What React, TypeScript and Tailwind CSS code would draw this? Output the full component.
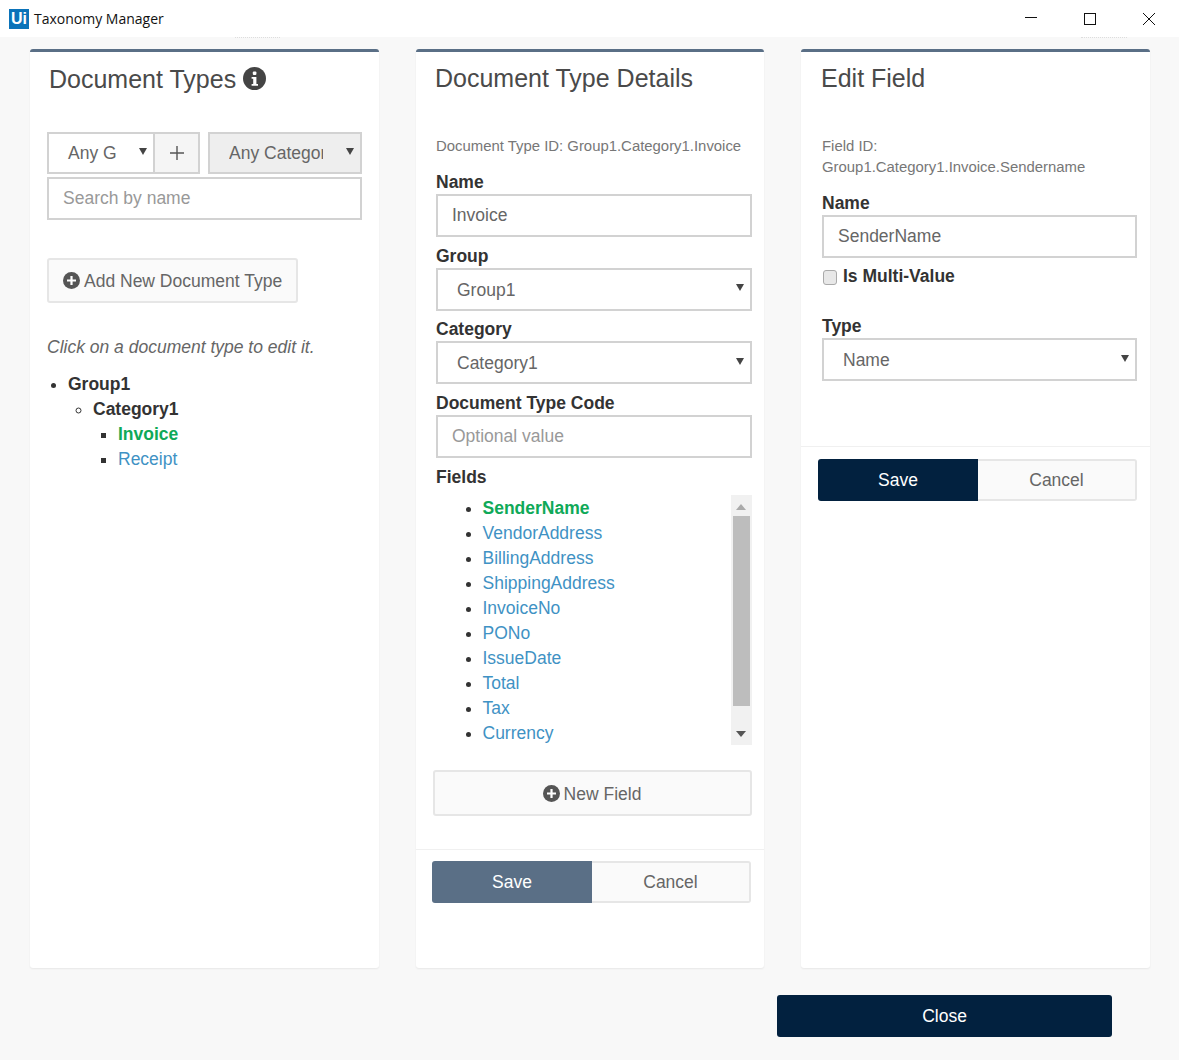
import React from "react";

const Caret = ({ className = "" }: { className?: string }) => (
  <svg width="8" height="7" viewBox="0 0 8 7" className={className}>
    <path d="M0 0h8L4 7z" fill="#444" />
  </svg>
);

const PlusCircle = () => (
  <svg width="17" height="17" viewBox="0 0 17 17" className="shrink-0">
    <circle cx="8.5" cy="8.5" r="8.5" fill="#555" />
    <path d="M8.5 4v9M4 8.5h9" stroke="#fff" strokeWidth="2.2" />
  </svg>
);

const Label = ({ children }: { children: React.ReactNode }) => (
  <div className="h-[22px] text-[17.5px] leading-[20px] font-bold text-[#333]">{children}</div>
);

const Input = ({ children, muted }: { children: React.ReactNode; muted?: boolean }) => (
  <div className={`h-[43px] border-2 border-[#d2d2d2] bg-white pl-[14px] text-[17.5px] leading-[39px] ${muted ? "text-[#999]" : "text-[#666]"}`}>
    {children}
  </div>
);

const Select = ({ children }: { children: React.ReactNode }) => (
  <div className="flex h-[43px] items-center justify-between border-2 border-[#d2d2d2] bg-white pl-[19px] pr-[6px] text-[17.5px] text-[#666]">
    <span className="pt-[2px]">{children}</span>
    <Caret className="-mt-[3px]" />
  </div>
);

const SaveCancel = ({ save }: { save: string }) => (
  <div className="flex h-[42px]">
    <div className={`flex w-[160px] items-center justify-center rounded-l-[3px] text-[17.5px] text-white ${save}`}>Save</div>
    <div className="flex w-[159px] items-center justify-center rounded-r-[3px] border-2 border-l-0 border-[#e6e6e6] bg-[#fafafa] text-[17.5px] text-[#666]">Cancel</div>
  </div>
);

const Panel = ({ children }: { children: React.ReactNode }) => (
  <section className="h-[919px] w-[348.5px] rounded-[3px] border-t-[3px] border-[#5a6f86] bg-white shadow-[0_1px_2px_rgba(0,0,0,0.07)]">
    {children}
  </section>
);

const fields = ["VendorAddress", "BillingAddress", "ShippingAddress", "InvoiceNo", "PONo", "IssueDate", "Total", "Tax", "Currency"];

export default function App() {
  return (
    <div className="relative flex h-[1060px] w-[1179px] flex-col overflow-hidden bg-[#f8f8f8] font-['Liberation_Sans',sans-serif]">
      <header className="flex h-[37px] shrink-0 items-center bg-white pl-[9px]">
        <div className="flex h-[20px] w-[20px] items-center justify-center bg-[#0b73b9] text-[16px] font-bold leading-none text-white">Ui</div>
        <span className="ml-[5px] font-['Open_Sans',sans-serif] text-[14px] text-[#111]">Taxonomy Manager</span>
        <div className="ml-auto flex items-center">
          <svg width="14" height="14" viewBox="0 0 14 14" className="mr-[45px]"><path d="M1 5.5h12" stroke="#111" strokeWidth="1" /></svg>
          <svg width="14" height="14" viewBox="0 0 14 14" className="mr-[45px]"><rect x="1.5" y="1.5" width="11" height="11" fill="none" stroke="#111" strokeWidth="1" /></svg>
          <svg width="14" height="14" viewBox="0 0 14 14" className="mr-[23px]"><path d="M1 1l12 12M13 1L1 13" stroke="#111" strokeWidth="1" /></svg>
        </div>
      </header>
      <div className="absolute left-[235px] top-[37px] w-[45px] border-t border-dotted border-[#ddd]" />
      <div className="absolute left-[1081px] top-[37px] w-[46px] border-t border-dotted border-[#ddd]" />

      <main className="ml-[30px] mt-[12px] flex gap-[37px]">
        <Panel>
          <div className="flex h-[56px] items-center pl-[19px]">
            <h2 className="text-[25px] text-[#4a4a4a]">Document Types</h2>
            <svg width="23" height="23" viewBox="0 0 23 23" className="ml-[7px] -mt-[4px]">
              <circle cx="11.5" cy="11.5" r="11.5" fill="#444" />
              <rect x="9.8" y="4.5" width="3.6" height="3.4" rx="1" fill="#fff" />
              <path d="M8.6 10h4.8v7h1.6v1.8H8.6V17h1.6v-5.2H8.6z" fill="#fff" />
            </svg>
          </div>
          <div className="ml-[17px] mt-[24px] w-[315px]">
            <div className="flex h-[42px]">
              <div className="flex w-[108px] items-center justify-between border-2 border-[#d2d2d2] bg-white pl-[19px] pr-[6px] text-[17.5px] text-[#666]">
                <span className="pt-[1px]">Any G</span>
                <Caret className="-mt-[3px]" />
              </div>
              <div className="flex w-[45px] items-center justify-center border-2 border-l-0 border-[#d2d2d2] bg-[#f5f5f5]">
                <svg width="14" height="14" viewBox="0 0 14 14"><path d="M7 0v14M0 7h14" stroke="#555" strokeWidth="1.4" /></svg>
              </div>
              <div className="ml-[8px] flex w-[154px] items-center justify-between border-2 border-[#d2d2d2] bg-[#eeeeee] pl-[19px] pr-[6px] text-[17.5px] text-[#666]">
                <span className="w-[94px] overflow-hidden whitespace-nowrap pt-[1px]">Any Category</span>
                <Caret className="-mt-[3px]" />
              </div>
            </div>
            <div className="mt-[3px] h-[43px] border-2 border-[#d2d2d2] bg-white pl-[14px] text-[17.5px] leading-[39px] text-[#999]">Search by name</div>
            <div className="mt-[38px] flex h-[45px] w-[251px] items-center rounded-[3px] border-2 border-[#e6e6e6] bg-[#fafafa] pl-[14px] text-[17.5px] text-[#666]">
              <PlusCircle />
              <span className="ml-[4px] pt-[1px]">Add New Document Type</span>
            </div>
            <p className="mt-[33px] text-[17.5px] italic leading-[22px] text-[#666]">Click on a document type to edit it.</p>
          </div>
          <ul className="ml-[38px] mt-[14px] list-disc text-[17.5px] leading-[25px] font-bold text-[#333] marker:text-[#333]">
            <li>
              Group1
              <ul className="ml-[25px] list-[circle]">
                <li>
                  Category1
                  <ul className="ml-[25px] list-[square]">
                    <li className="text-[#0fa958]">Invoice</li>
                    <li className="font-normal text-[#3f92c4]">Receipt</li>
                  </ul>
                </li>
              </ul>
            </li>
          </ul>
        </Panel>

        <Panel>
          <div className="flex h-[56px] items-center pb-[2px] pl-[19.5px]">
            <h2 className="text-[25px] text-[#4a4a4a]">Document Type Details</h2>
          </div>
          <div className="ml-[20.5px] w-[315.5px]">
            <p className="mt-[27px] h-[22px] text-[14.9px] leading-[22px] text-[#777]">Document Type ID: Group1.Category1.Invoice</p>
            <div className="mt-[15px]"><Label>Name</Label><Input>Invoice</Input></div>
            <div className="mt-[8.5px]"><Label>Group</Label><Select>Group1</Select></div>
            <div className="mt-[8.5px]"><Label>Category</Label><Select>Category1</Select></div>
            <div className="mt-[8.5px]"><Label>Document Type Code</Label><Input muted>Optional value</Input></div>
            <div className="mt-[9.5px]"><Label>Fields</Label></div>
            <div className="mt-[6px] flex h-[250px]">
              <ul className="flex-1 list-disc pl-[46.5px] pt-[1px] text-[17.5px] leading-[25px] text-[#3f92c4] marker:text-[#333]">
                <li className="font-bold text-[#0fa958]">SenderName</li>
                {fields.map((f) => <li key={f}>{f}</li>)}
              </ul>
              <div className="flex w-[21px] flex-col items-center bg-[#f1f1f1]">
                <svg width="10" height="6" viewBox="0 0 10 6" className="mt-[9px]"><path d="M0 6h10L5 0z" fill="#aaa" /></svg>
                <div className="mt-[6px] h-[190px] w-[17px] bg-[#bdbdbd]" />
                <svg width="10" height="6" viewBox="0 0 10 6" className="mt-[25px]"><path d="M0 0h10L5 6z" fill="#555" /></svg>
              </div>
            </div>
            <div className="-ml-[3.5px] mt-[25px] flex h-[46px] w-[319px] items-center justify-center rounded-[3px] border-2 border-[#e6e6e6] bg-[#fafafa] text-[17.5px] text-[#666]">
              <PlusCircle />
              <span className="ml-[4px] pt-[2px]">New Field</span>
            </div>
          </div>
          <div className="mt-[33px] border-t border-[#f0f0f0]" />
          <div className="ml-[16.5px] mt-[11px]"><SaveCancel save="bg-[#5a6f86]" /></div>
        </Panel>

        <Panel>
          <div className="flex h-[56px] items-center pb-[2px] pl-[20px]">
            <h2 className="text-[25px] text-[#4a4a4a]">Edit Field</h2>
          </div>
          <div className="ml-[21px] w-[315px]">
            <p className="mt-[28px] text-[14.9px] leading-[21px] text-[#777]">Field ID:<br />Group1.Category1.Invoice.Sendername</p>
            <div className="mt-[15px]"><Label>Name</Label><Input>SenderName</Input></div>
            <div className="mt-[8px] flex h-[22px] items-center">
              <div className="ml-[1px] h-[15px] w-[14px] rounded-[3px] border border-[#aaa] bg-[#e8e8e8]" />
              <span className="ml-[6px] pb-[2px] text-[17.5px] font-bold text-[#333]">Is Multi-Value</span>
            </div>
            <div className="mt-[28px]"><Label>Type</Label><Select>Name</Select></div>
          </div>
          <div className="mt-[65px] border-t border-[#f0f0f0]" />
          <div className="ml-[17px] mt-[12px]"><SaveCancel save="bg-[#02213f]" /></div>
        </Panel>
      </main>

      <div className="ml-[777px] mt-[27px] flex h-[42px] w-[335px] items-center justify-center rounded-[3px] bg-[#02213f] text-[17.5px] text-white">Close</div>
    </div>
  );
}
